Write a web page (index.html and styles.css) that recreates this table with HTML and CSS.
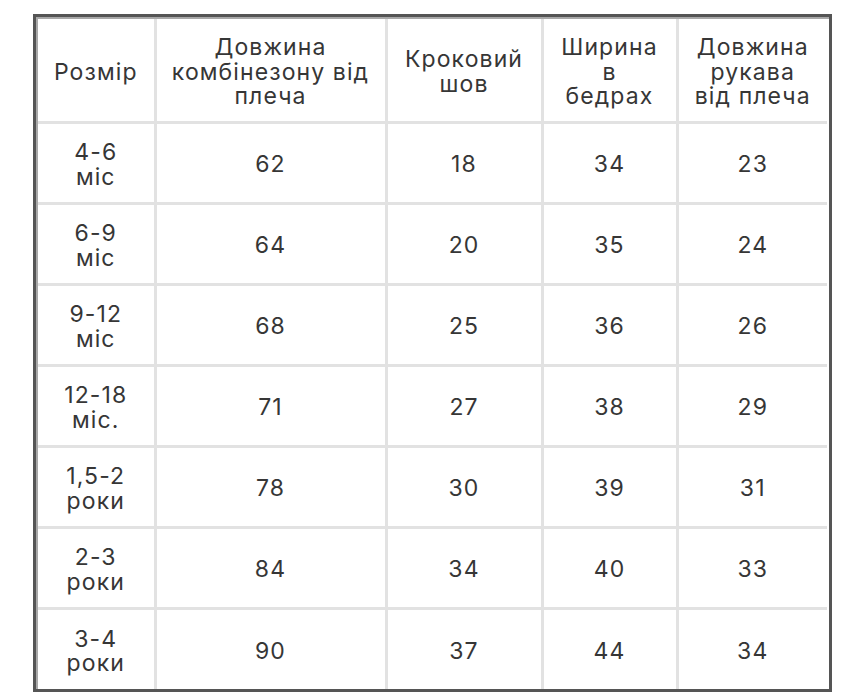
FILE: index.html
```html
<!DOCTYPE html>
<html lang="uk">
<head>
<meta charset="utf-8">
<link rel="stylesheet" href="styles.css">
</head>
<body>
<div class="frame">
<table class="sizes">
  <colgroup>
    <col class="c1"><col class="c2"><col class="c3"><col class="c4"><col class="c5">
  </colgroup>
  <thead>
    <tr class="head">
      <th>Розмір</th>
      <th>Довжина<br>комбінезону від<br>плеча</th>
      <th>Кроковий<br>шов</th>
      <th>Ширина<br>в<br>бедрах</th>
      <th>Довжина<br>рукава<br>від плеча</th>
    </tr>
  </thead>
  <tbody>
    <tr><td>4-6<br>міс</td><td>62</td><td>18</td><td>34</td><td>23</td></tr>
    <tr><td>6-9<br>міс</td><td>64</td><td>20</td><td>35</td><td>24</td></tr>
    <tr><td>9-12<br>міс</td><td>68</td><td>25</td><td>36</td><td>26</td></tr>
    <tr><td>12-18<br>міс.</td><td>71</td><td>27</td><td>38</td><td>29</td></tr>
    <tr><td>1,5-2<br>роки</td><td>78</td><td>30</td><td>39</td><td>31</td></tr>
    <tr><td>2-3<br>роки</td><td>84</td><td>34</td><td>40</td><td>33</td></tr>
    <tr><td>3-4<br>роки</td><td>90</td><td>37</td><td>44</td><td>34</td></tr>
  </tbody>
</table>
</div>
</body>
</html>
```
FILE: styles.css
```css
html, body {
  margin: 0;
  padding: 0;
  background: #ffffff;
}
body {
  padding: 14px 0 0 33px;
}
.frame {
  width: 791px;
  border: 3px solid #555555;
  box-shadow: inset 2px 2px 0 #a8a8a8;
  padding: 2px 0 0 2px;
}
.sizes {
  width: 789px;
  table-layout: fixed;
  border-collapse: collapse;
  font-family: Inter, "Noto Sans", sans-serif;
  font-size: 23px;
  line-height: 24.5px;
  color: #363636;
  letter-spacing: 1.1px;
}
.c1 { width: 117px; }
.c2 { width: 231px; }
.c3 { width: 156px; }
.c4 { width: 135px; }
.c5 { width: 150px; }
.sizes th, .sizes td {
  border: 3px solid #e2e2e2;
  text-align: center;
  vertical-align: middle;
  font-weight: 400;
  padding: 4px 0 0 0;
}
.sizes tr > :first-child { border-left: 0; }
.sizes tr > :last-child { border-right: 0; }
.sizes thead th { border-top: 0; }
.sizes tbody tr:last-child td { border-bottom: 0; }
.head { height: 103px; }
.sizes tbody tr { height: 81px; }
```
